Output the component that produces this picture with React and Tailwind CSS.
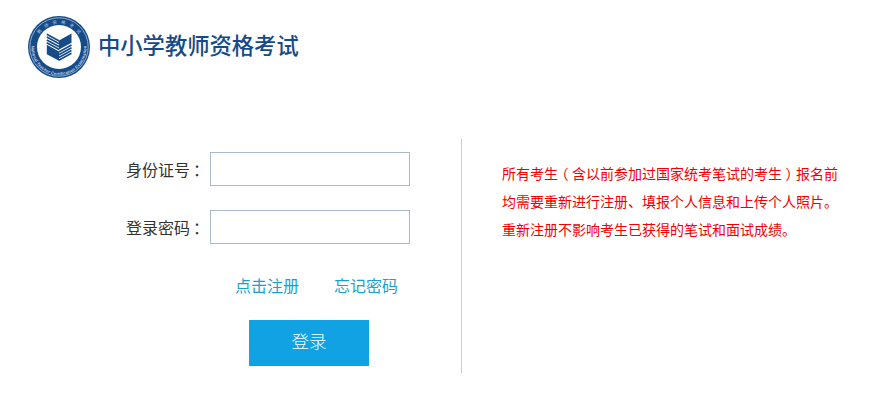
import React, { useState } from "react";

function Logo() {
  return (
    <svg width="62" height="62" viewBox="0 0 62 62" className="shrink-0">
      <defs>
        <path id="ringTop" d="M 7.6 31 A 23.4 23.4 0 0 1 54.4 31" />
        <path id="ringBottom" d="M 3.9 27 A 27.5 27.5 0 1 0 58.1 27" />
      </defs>
      <circle cx="31" cy="31" r="31" fill="#174b88" />
      <circle cx="31" cy="31" r="29.2" fill="none" stroke="#a9c3df" strokeWidth="0.8" />
      <circle cx="31" cy="31" r="22" fill="#fff" />
      <text fill="#b5cbe3" fontSize="4.3" className="font-['Noto_Sans_CJK_SC',sans-serif]">
        <textPath href="#ringTop" startOffset="50%" textAnchor="middle" textLength="46">
          教师资格考试
        </textPath>
      </text>
      <text fill="#c3d5e9" fontSize="4.1" fontWeight="bold" className="font-['Liberation_Sans',sans-serif]">
        <textPath href="#ringBottom" startOffset="50%" textAnchor="middle" textLength="90">
          National Teacher Certification Examination
        </textPath>
      </text>
      {/* open book: solid pages, then the striped ones */}
      <g fill="#174b88">
        <path d="M31 24.4 L43.5 17.6 V26.8 L31 33.4 Z" />
        <path d="M18.8 28.8 L31 35.4 V44.8 L18.8 38.2 Z" />
      </g>
      <g fill="none" stroke="#174b88" strokeWidth="1.7">
        <path d="M18.8 18.2 L31.2 24.9" />
        <path d="M18.8 21.1 L31.2 27.8" />
        <path d="M18.8 24 L31.2 30.7" />
        <path d="M18.8 26.7 L31.2 33.4" />
        <path d="M30.8 35.9 L43.5 29" />
        <path d="M30.8 38.7 L43.5 31.8" />
        <path d="M30.8 41.5 L43.5 34.6" />
        <path d="M30.8 44.2 L43.5 37.3" />
      </g>
    </svg>
  );
}

function Field({ id, label, type, value, onChange }) {
  return (
    <div className="flex h-[34px] items-center">
      <label htmlFor={id} className="flex w-[84px] text-[16px] leading-6 whitespace-nowrap text-[#333]">
        {label}
        <span className="pl-[3px]">：</span>
      </label>
      <input
        id={id}
        type={type}
        value={value}
        onChange={(e) => onChange(e.target.value)}
        className="h-[34px] w-[200px] border border-[#a7b9cb] bg-white px-2 outline-none"
      />
    </div>
  );
}

// full-width bracket centred in its cell
function Bracket({ children }) {
  return (
    <span className="inline-block w-[14px] text-center [font-feature-settings:'halt']">{children}</span>
  );
}

export default function App() {
  const [idNumber, setIdNumber] = useState("");
  const [password, setPassword] = useState("");

  return (
    <div
      lang="zh-CN"
      className="h-[405px] w-[893px] overflow-hidden bg-white font-['Noto_Sans_CJK_SC',sans-serif]"
    >
      {/* Header */}
      <header className="flex h-[139px] items-start pt-4 pl-7">
        <Logo />
        <h1 className="ml-2 pt-3 text-[22.3px] leading-8 font-medium whitespace-nowrap text-[#174b88]">
          中小学教师资格考试
        </h1>
      </header>

      <main className="flex h-[234px]">
        {/* Login form */}
        <form
          onSubmit={(e) => e.preventDefault()}
          className="w-[462px] border-r border-[#ccc] pt-[13px] pl-[126px]"
        >
          <div className="flex flex-col gap-6">
            <Field id="idNumber" label="身份证号" type="text" value={idNumber} onChange={setIdNumber} />
            <Field id="password" label="登录密码" type="password" value={password} onChange={setPassword} />
          </div>
          <div className="mt-[29px] ml-[109px] flex gap-[35px] text-[16px] leading-6 text-[#1a9fd0]">
            <a href="#register">点击注册</a>
            <a href="#forgot">忘记密码</a>
          </div>
          <button
            type="submit"
            className="mt-[23px] ml-[123px] block h-[46px] w-[120px] bg-[#10a2e3] pb-[3px] text-[17.6px] font-light text-white"
          >
            登录
          </button>
        </form>

        {/* Notice */}
        <p className="pt-5 pl-10 text-[14px] leading-7 whitespace-nowrap text-[#f00000]">
          所有考生<Bracket>（</Bracket>含以前参加过国家统考笔试的考生<Bracket>）</Bracket>报名前
          <br />
          均需要重新进行注册、填报个人信息和上传个人照片。
          <br />
          重新注册不影响考生已获得的笔试和面试成绩。
        </p>
      </main>
    </div>
  );
}
